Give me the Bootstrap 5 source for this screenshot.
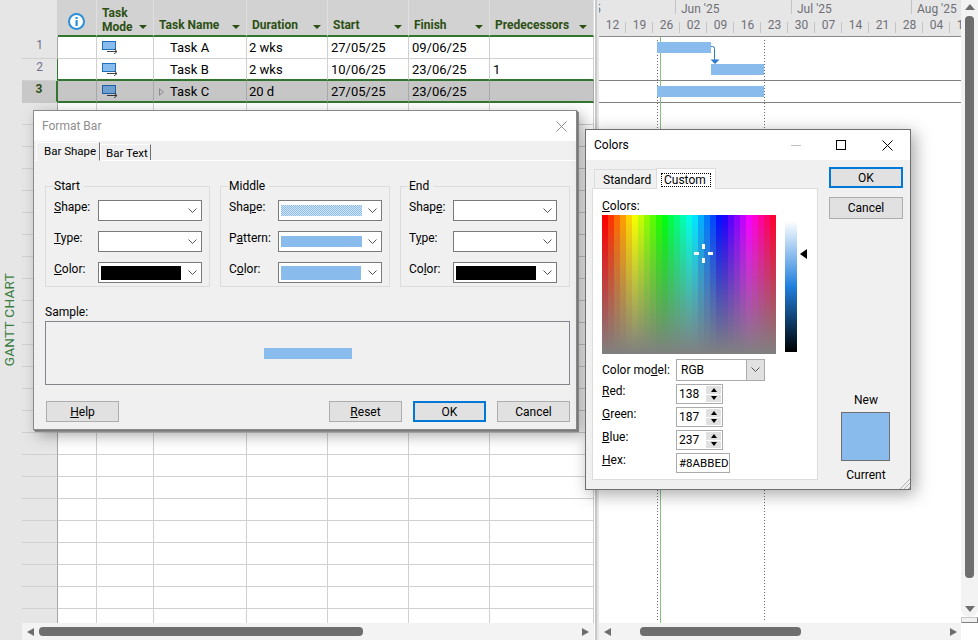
<!DOCTYPE html>
<html lang="en">
<head>
<meta charset="utf-8">
<title>Gantt chart with Format Bar and Colors dialogs</title>
<link rel="stylesheet" href="https://cdn.jsdelivr.net/npm/bootstrap@5.3.0/dist/css/bootstrap.min.css">
<style>
html,body{margin:0;background:#fff;}
body{font-family:Roboto,"Liberation Sans",sans-serif;font-size:12px;color:#000;}
.stage{width:978px;height:640px;position:relative;overflow:hidden;}
.gutter{width:22px;background:#e6e6e6;}
.gutter-label{writing-mode:vertical-rl;transform:rotate(180deg);color:#3a7d3f;font-size:13.5px;letter-spacing:.3px;margin-top:273px;margin-bottom:auto;margin-right:4px;line-height:17px;align-self:center;}
.sheet{width:572px;}
.sheet-clip{height:623px;overflow:hidden;}
.table.gt-tbl{width:572px;table-layout:fixed;border-collapse:separate;border-spacing:0;margin:0;--bs-table-bg:transparent;}
.table.gt-tbl>:not(caption)>*>*{padding:0 3px;border-width:0 1px 1px 0;border-style:solid;border-color:#d0d0d0;height:22px;box-shadow:none;font-size:13px;line-height:15px;vertical-align:middle;color:#000;background:#fff;white-space:nowrap;}
.table.gt-tbl>thead>tr>th{height:37px;padding:0 6px 1px 5px;background:#d2d2d2;border-right-color:#e0e0e0;border-bottom:2px solid #32752f;color:#2c4f13;font-size:12px;font-weight:700;line-height:14px;vertical-align:bottom;}
.table.gt-tbl>thead>tr>th.rn-head{background:#e6e6e6;border-right:1px solid #d0d0d0;border-bottom:0;}
.table.gt-tbl>tbody>tr>td.rn{background:#e6e6e6;border-right:1px solid #a6a6a6;border-bottom-color:#d0d0d0;text-align:center;color:#6f6f88;font-size:12px;padding:0 0 4px;}
.table.gt-tbl>tbody>tr>td.tn{padding-left:16px;position:relative;}
.table.gt-tbl>tbody>tr>td.dur{padding-left:2px;}
.table.gt-tbl>tbody>tr.r2>td:not(.rn){border-bottom:2px solid #32752f;}
.table.gt-tbl>tbody>tr.r3>td{background:#c6c6c6;border-bottom:2px solid #32752f;border-right-color:#a8a8a8;}
.table.gt-tbl>tbody>tr.r3>td.rn{background:#c8c8c8;color:#2c4f13;font-weight:700;border-bottom:2px solid #c8c8c8;border-right:2px solid #32752f;padding:0 0 4px;}
.table.gt-tbl>tbody>tr.r2>td.rn{border-right-color:#32752f;}
.hd-txt{margin-bottom:2px;}
.hd-txt2{margin-bottom:0;}
.hd-caret{display:block;flex:none;width:0;height:0;border-left:4px solid transparent;border-right:4px solid transparent;border-top:4px solid #2c4f13;margin-bottom:5px;}
.exp-tri{position:absolute;left:5px;top:7px;width:0;height:0;border-left:5px solid #8a8a8a;border-top:4px solid transparent;border-bottom:4px solid transparent;}
.exp-tri::after{content:"";position:absolute;left:-4px;top:-2px;width:0;height:0;border-left:3px solid #c6c6c6;border-top:2px solid transparent;border-bottom:2px solid transparent;}
.mode-ico{display:block;width:16px;height:13px;margin-left:2px;}
.hbar{height:17px;background:#f3f3f3;}
.hthumb{height:9px;background:#6e6e6e;border-radius:4px;}
.ar-l,.ar-r,.ar-u,.ar-d{width:0;height:0;flex:none;border-style:solid;border-color:transparent;}
.ar-l{border-width:4px 7px 4px 0;border-right-color:#6e6e6e;}
.ar-r{border-width:4px 0 4px 7px;border-left-color:#6e6e6e;}
.ar-u{border-width:0 5px 6px 5px;border-bottom-color:#6e6e6e;}
.ar-d{border-width:6px 5px 0 5px;border-top-color:#6e6e6e;}
.sb-l1{margin-left:5px;}.th-l1{margin-left:5px;width:324px;}.ar-r1{margin-left:auto;margin-right:5px;}
.sb-l2{margin-left:5px;}.th-l2{margin-left:29px;width:161px;}.ar-r2{margin-left:auto;margin-right:4px;}
.splitter{width:5px;background:linear-gradient(to right,#fff 0,#fff 1px,#c8c8c8 1px,#c8c8c8 3px,#e6e6e6 3px);}
.gantt{width:362px;}
.g-head{height:37px;background:#e6e6e6;border-bottom:1px solid #8a8a8a;overflow:hidden;color:#6f6f78;}
.months{height:18px;font-size:12px;line-height:18px;white-space:nowrap;}
.mon{height:14px;border-left:1px solid #c4c4c4;padding-left:5px;flex:none;}
.mon-first{width:76px;flex:none;}
.mon-first span{display:block;margin-left:-5px;}
.mon-jun{width:116px}.mon-jul{width:120px}.mon-aug{width:60px;}
.days{height:18px;font-size:12px;line-height:14px;white-space:nowrap;}
.dcell{width:27px;flex:none;height:18px;text-align:center;position:relative;}
.dcell::after{content:"";position:absolute;right:0;top:4px;height:11px;width:1px;background:#c4c4c4;}
.g-body{height:586px;position:relative;overflow:hidden;background:#fff;}
.gbar{position:absolute;height:11px;background:#8abbed;}
.bar-a{left:58px;top:5px;width:54px;}
.bar-b{left:112px;top:27px;width:53px;}
.bar-c{left:58px;top:49px;width:107px;}
.g-rule{position:absolute;left:0;right:0;height:1px;background:#808080;}
.rule-1{top:43px}.rule-2{top:65px;}
.g-dot{position:absolute;top:3px;bottom:3px;width:1px;background:repeating-linear-gradient(to bottom,#6a6a6a 0 1px,transparent 1px 3px);}
.dot-1{left:58px}.dot-2{left:165px;}
.g-now{position:absolute;top:0;bottom:0;left:61px;width:1px;background:#87c187;}
.g-link{position:absolute;left:111px;top:9px;width:12px;height:19px;}
.vbar{width:17px;background:#fff;}
.vtrack{height:617px;background:#f3f3f3;border-radius:0 0 8px 8px;padding:4px 0 5px;}
.vthumb{width:9px;height:562px;margin-top:6px;background:#6e6e6e;border-radius:4px;}
.vgrip{height:6px;background:#f0f0f0;border:1px solid #c8c8c8;border-bottom-color:#808080;border-right-color:#808080;margin:0;}
.win{position:absolute;background:#f0f0f0;border:1px solid #8a8a8a;}
.win-fmt{left:33px;top:110px;width:544px;height:320px;box-shadow:1px 1px 0 #7a7a7a,2px 2px 0 #8a8a8a,5px 5px 14px rgba(0,0,0,.35);}
.win-col{left:585px;top:129px;width:326px;height:361px;border-color:#6f6f6f;box-shadow:4px 4px 16px rgba(0,0,0,.35);}
.win-title{height:30px;background:#fff;padding:0 8px;font-size:12px;flex:none;}
.win-fmt .win-title{color:#8e8e8e;}
.win-x{width:11px;height:11px;display:block;}
.win-x-fmt{margin-right:1px;}
.tabs-fmt{height:20px;padding-left:2px;align-items:flex-end;border-bottom:0;flex:none;flex-wrap:nowrap;position:relative;--bs-nav-tabs-border-width:0;}
.tabs-fmt::after{content:"";position:absolute;left:0;right:0;bottom:0;height:1px;background:#fff;}
.nav-tabs .nav-link.wtab{font-size:11.5px;line-height:14px;color:#000;background:#f0f0f0;border:1px solid #fff;border-right:1px solid #6f6f6f;border-bottom:0;border-radius:0;padding:1px 0 1px 5px;height:17px;width:51px;margin:0;white-space:nowrap;}
.nav-tabs .nav-link.wtab.active{height:19px;padding:1px 0 0 7px;width:64px;margin:0;background:#f0f0f0;color:#000;position:relative;z-index:1;border-bottom:1px solid #f0f0f0;}
.fmt-groups{margin-top:17px;padding:0 6px 0 11px;gap:10px;}
.grp{border:1px solid #dcdcdc;padding:0 0 4px 8px;margin:0;height:109px;flex:none;}
.grp legend{float:none;width:auto;font-size:12px;line-height:16px;padding:0 4px 0 0;margin:0 0 6px 0;background:transparent;color:#000;}
.grp-a{width:165px;}.grp-b{width:170px;}.grp-c{width:170px;}
.frow{margin-bottom:10px;align-items:flex-start;}
.frow:last-child{margin-bottom:0;}
.flab{width:44px;flex:none;line-height:15px;}
.grp-b .flab{width:49px;}
.combo{width:104px;height:21px;background:#fff;border:1px solid #7a7a7a;padding:2px;}
.swatch{display:block;width:81px;height:13px;}
.sw-k{background:#000;height:14px;width:80px;}
.sw-bb{background:#8abbed;height:11px;}
.sw-bc{background:#8abbed;height:14px;width:80px;}
.sw-p{height:11px;background-color:#8abbed;background-image:repeating-conic-gradient(#d4e6f8 0 25%,#8abbed 0 50%);background-size:2px 2px;}
.chev{width:9px;height:6px;display:block;margin-left:auto;margin-right:2px;flex:none;}
.sample-lab{margin:18px 0 1px 11px;line-height:15px;}
.sample-box{height:64px;margin:0 6px 0 11px;border:1px solid #84848c;}
.sample-bar{display:block;width:88px;height:11px;background:#8abbed;}
.win-btns{margin-top:16px;padding:0 6px 0 12px;gap:11px;}
.btn.wbtn{width:73px;height:21px;padding:1px 0 0;font-size:12px;line-height:19px;color:#000;background:#e1e1e1;border:1px solid #adadad;border-radius:0;}
.btn.wbtn-def{border:2px solid #0078d7;line-height:17px;}
.wc{display:block;}
.col-min{width:10px;height:1px;background:#c0c0c0;margin-right:35px;}
.col-max{width:10px;height:10px;border:1px solid #000;margin-right:36px;}
.col-x{width:11px;height:11px;margin-right:9px;}
.col-main{padding-left:6px;}
.col-left{width:226px;}
.tabs-col{height:28px;padding:0 0 0 2px;align-items:flex-end;flex-wrap:nowrap;--bs-nav-tabs-border-width:0;border-bottom:0;}
.nav-tabs .nav-link.ctab{font-size:12px;line-height:14px;color:#000;height:19px;width:62px;padding:3px 0 0 8px;background:#f0f0f0;border:1px solid #dcdcdc;border-width:1px 0 0 1px;border-radius:0;margin:0;}
.nav-tabs .nav-link.ctab.active{height:21px;width:60px;padding:4px;background:#fff;border:1px solid #dcdcdc;border-bottom:0;color:#000;margin:0;position:relative;top:1px;}
.focus-dots{display:block;border:1px dotted #000;padding:0 2px;line-height:12px;height:14px;}
.col-panel{height:292px;width:226px;background:#fff;border:1px solid #dcdcdc;padding:10px 9px 0;}
.col-lab{line-height:15px;height:16px;}
.spec-row{height:139px;gap:9px;position:relative;}
.spectrum{width:174px;height:139px;position:relative;flex:none;background:linear-gradient(to right,red,yellow,lime,cyan,blue,magenta,red);}
.spec-fade{position:absolute;inset:0;background:linear-gradient(to bottom,rgba(128,128,128,0),#808080);}
.cross{position:absolute;left:92px;top:29px;width:19px;height:19px;}
.lum{width:12px;height:131px;margin-top:6px;background:linear-gradient(to bottom,#fff,hsl(210,75%,50%) 50%,#000);flex:none;}
.lum-mark{width:0;height:0;margin-top:34px;margin-left:-6px;border-style:solid;border-width:5px 7px 5px 0;border-color:transparent #000 transparent transparent;flex:none;}
.mrow{margin-top:3px;align-items:flex-start;}
.mrow-sel{margin-top:5px;align-items:center;}
.mlab{width:74px;flex:none;line-height:15px;}
.sel-box{width:89px;height:22px;border:1px solid #ababab;background:#fff;padding-left:4px;line-height:20px;}
.sel-btn{width:18px;height:20px;margin-left:auto;background:#e1e1e1;border-left:1px solid #ababab;}
.spin{width:47px;height:20px;border:1px solid #ababab;background:#fff;}
.spin-val{padding-left:2px;line-height:18px;flex:1;}
.spin-btns{width:15px;margin:1px;gap:1px;}
.spin-b{flex:1;background:#e1e1e1;border:0;}
.spin-u{width:0;height:0;border-left:3px solid transparent;border-right:3px solid transparent;border-bottom:4px solid #000;}
.spin-d{width:0;height:0;border-left:3px solid transparent;border-right:3px solid transparent;border-top:4px solid #000;}
.hexbox{width:54px;height:20px;border:1px solid #ababab;background:#fff;padding-left:2px;line-height:18px;font-size:11.5px;}
.col-right{width:74px;margin-left:11px;padding-top:7px;position:relative;}
.col-right .btn.wbtn{width:74px;}
.col-right .btn.wbtn+.btn.wbtn{margin-top:9px;height:22px;}
.new-lab{margin-top:174px;line-height:15px;text-align:center;}
.new-sw{width:49px;height:49px;background:#8abbed;border:1px solid #6f6f6f;margin:4px 0 7px 12px;}
.cur-lab{line-height:15px;text-align:center;}
.grip{position:absolute;right:0;bottom:0;width:11px;height:11px;background:repeating-linear-gradient(135deg,transparent 0 2px,#b0b0b0 2px 3px);clip-path:polygon(100% 0,100% 100%,0 100%);}
</style>
</head>
<body>
<div class="stage d-flex">
  <div class="gutter d-flex flex-column"><div class="gutter-label">GANTT CHART</div></div>
  <div class="sheet d-flex flex-column">
    <div class="sheet-clip">
      <table class="table gt-tbl">
        <colgroup><col style="width:36px"><col style="width:39px"><col style="width:57px"><col style="width:93px"><col style="width:81px"><col style="width:81px"><col style="width:81px"><col style="width:104px"></colgroup>
        <thead><tr>
          <th class="rn-head"></th>
          <th><div class="d-flex justify-content-center pb-1 pe-0"><svg width="17" height="17" viewBox="0 0 17 17"><circle cx="8.5" cy="8.5" r="7.5" fill="#fff" stroke="#2b90d9" stroke-width="2"/><rect x="7.5" y="7" width="2.2" height="6" fill="#2b90d9"/><rect x="7.5" y="4" width="2.2" height="2" fill="#2b90d9"/></svg></div></th>
          <th><div class="d-flex justify-content-between align-items-end"><span class="hd-txt2">Task<br>Mode</span><i class="hd-caret"></i></div></th>
          <th><div class="d-flex justify-content-between align-items-end"><span class="hd-txt">Task Name</span><i class="hd-caret"></i></div></th>
          <th><div class="d-flex justify-content-between align-items-end"><span class="hd-txt">Duration</span><i class="hd-caret"></i></div></th>
          <th><div class="d-flex justify-content-between align-items-end"><span class="hd-txt">Start</span><i class="hd-caret"></i></div></th>
          <th><div class="d-flex justify-content-between align-items-end"><span class="hd-txt">Finish</span><i class="hd-caret"></i></div></th>
          <th><div class="d-flex justify-content-between align-items-end"><span class="hd-txt">Predecessors</span><i class="hd-caret"></i></div></th>
        </tr></thead>
        <tbody>
          <tr><td class="rn">1</td><td></td><td><svg class="mode-ico" viewBox="0 0 16 13"><rect x=".5" y=".5" width="13" height="8" fill="#8abbed" stroke="#1f6fbf"/><path d="M5 10.5h10M12 8l3 2.5L12 13" fill="none" stroke="#444"/></svg></td><td class="tn">Task A</td><td class="dur">2 wks</td><td>27/05/25</td><td>09/06/25</td><td></td></tr>
          <tr class="r2"><td class="rn">2</td><td></td><td><svg class="mode-ico" viewBox="0 0 16 13"><rect x=".5" y=".5" width="13" height="8" fill="#8abbed" stroke="#1f6fbf"/><path d="M5 10.5h10M12 8l3 2.5L12 13" fill="none" stroke="#444"/></svg></td><td class="tn">Task B</td><td class="dur">2 wks</td><td>10/06/25</td><td>23/06/25</td><td>1</td></tr>
          <tr class="r3"><td class="rn">3</td><td></td><td><svg class="mode-ico" viewBox="0 0 16 13"><rect x=".5" y=".5" width="13" height="8" fill="#6f9fcf" stroke="#1f5f9f"/><path d="M5 10.5h10M12 8l3 2.5L12 13" fill="none" stroke="#333"/></svg></td><td class="tn"><i class="exp-tri"></i>Task C</td><td class="dur">20 d</td><td>27/05/25</td><td>23/06/25</td><td></td></tr>
          <tr><td class="rn"></td><td></td><td></td><td></td><td></td><td></td><td></td><td></td></tr>
          <tr><td class="rn"></td><td></td><td></td><td></td><td></td><td></td><td></td><td></td></tr>
          <tr><td class="rn"></td><td></td><td></td><td></td><td></td><td></td><td></td><td></td></tr>
          <tr><td class="rn"></td><td></td><td></td><td></td><td></td><td></td><td></td><td></td></tr>
          <tr><td class="rn"></td><td></td><td></td><td></td><td></td><td></td><td></td><td></td></tr>
          <tr><td class="rn"></td><td></td><td></td><td></td><td></td><td></td><td></td><td></td></tr>
          <tr><td class="rn"></td><td></td><td></td><td></td><td></td><td></td><td></td><td></td></tr>
          <tr><td class="rn"></td><td></td><td></td><td></td><td></td><td></td><td></td><td></td></tr>
          <tr><td class="rn"></td><td></td><td></td><td></td><td></td><td></td><td></td><td></td></tr>
          <tr><td class="rn"></td><td></td><td></td><td></td><td></td><td></td><td></td><td></td></tr>
          <tr><td class="rn"></td><td></td><td></td><td></td><td></td><td></td><td></td><td></td></tr>
          <tr><td class="rn"></td><td></td><td></td><td></td><td></td><td></td><td></td><td></td></tr>
          <tr><td class="rn"></td><td></td><td></td><td></td><td></td><td></td><td></td><td></td></tr>
          <tr><td class="rn"></td><td></td><td></td><td></td><td></td><td></td><td></td><td></td></tr>
          <tr><td class="rn"></td><td></td><td></td><td></td><td></td><td></td><td></td><td></td></tr>
          <tr><td class="rn"></td><td></td><td></td><td></td><td></td><td></td><td></td><td></td></tr>
          <tr><td class="rn"></td><td></td><td></td><td></td><td></td><td></td><td></td><td></td></tr>
          <tr><td class="rn"></td><td></td><td></td><td></td><td></td><td></td><td></td><td></td></tr>
          <tr><td class="rn"></td><td></td><td></td><td></td><td></td><td></td><td></td><td></td></tr>
          <tr><td class="rn"></td><td></td><td></td><td></td><td></td><td></td><td></td><td></td></tr>
          <tr><td class="rn"></td><td></td><td></td><td></td><td></td><td></td><td></td><td></td></tr>
          <tr><td class="rn"></td><td></td><td></td><td></td><td></td><td></td><td></td><td></td></tr>
          <tr><td class="rn"></td><td></td><td></td><td></td><td></td><td></td><td></td><td></td></tr>
          <tr><td class="rn"></td><td></td><td></td><td></td><td></td><td></td><td></td><td></td></tr>
        </tbody>
      </table>
    </div>
    <div class="hbar d-flex align-items-center"><i class="ar-l sb-l1"></i><div class="hthumb th-l1"></div><i class="ar-r ar-r1"></i></div>
  </div>
  <div class="splitter"></div>
  <div class="gantt d-flex flex-column">
    <div class="g-head">
      <div class="months d-flex">
        <div class="mon-first"><span>5</span></div>
        <div class="mon mon-jun">Jun '25</div>
        <div class="mon mon-jul">Jul '25</div>
        <div class="mon mon-aug">Aug '25</div>
      </div>
      <div class="days d-flex">
        <div class="dcell">12</div><div class="dcell">19</div><div class="dcell">26</div><div class="dcell">02</div><div class="dcell">09</div><div class="dcell">16</div><div class="dcell">23</div><div class="dcell">30</div><div class="dcell">07</div><div class="dcell">14</div><div class="dcell">21</div><div class="dcell">28</div><div class="dcell">04</div><div class="dcell">11</div>
      </div>
    </div>
    <div class="g-body">
      <div class="g-rule rule-1"></div>
      <div class="g-rule rule-2"></div>
      <div class="g-dot dot-1"></div>
      <div class="g-now"></div>
      <div class="g-dot dot-2"></div>
      <div class="gbar bar-a"></div>
      <div class="gbar bar-b"></div>
      <div class="gbar bar-c"></div>
      <svg class="g-link" viewBox="0 0 12 19"><path d="M1 .5h1.500Q4.500.5 4.500 2.500V14" fill="none" stroke="#2a7bd0"/><path d="M.5 13.500h9L5 18z" fill="#2a7bd0"/></svg>
    </div>
    <div class="hbar d-flex align-items-center"><i class="ar-l sb-l2"></i><div class="hthumb th-l2"></div><i class="ar-r ar-r2"></i></div>
  </div>
  <div class="vbar d-flex flex-column">
    <div class="vtrack d-flex flex-column align-items-center"><i class="ar-u"></i><div class="vthumb"></div><i class="ar-d mt-auto"></i></div>
    <div class="vgrip"></div>
  </div>

  <div class="win win-fmt d-flex flex-column">
    <div class="win-title d-flex align-items-center justify-content-between"><span>Format Bar</span><svg class="win-x win-x-fmt" viewBox="0 0 11 11"><path d="M.5.5l10 10M10.500.5l-10 10" stroke="#8e8e8e" fill="none"/></svg></div>
    <ul class="nav nav-tabs tabs-fmt">
      <li class="nav-item"><a class="nav-link wtab active" href="#">Bar Shape</a></li>
      <li class="nav-item"><a class="nav-link wtab" href="#">Bar Text</a></li>
    </ul>
    <div class="fmt-groups d-flex">
      <fieldset class="grp grp-a">
        <legend>Start</legend>
        <div class="frow d-flex"><span class="flab"><u>S</u>hape:</span><div class="combo d-flex align-items-center"><svg class="chev" viewBox="0 0 9 6"><path d="M.5.500l4 4 4-4" fill="none" stroke="#555"/></svg></div></div>
        <div class="frow d-flex"><span class="flab"><u>T</u>ype:</span><div class="combo d-flex align-items-center"><svg class="chev" viewBox="0 0 9 6"><path d="M.5.500l4 4 4-4" fill="none" stroke="#555"/></svg></div></div>
        <div class="frow d-flex"><span class="flab"><u>C</u>olor:</span><div class="combo d-flex align-items-center"><i class="swatch sw-k"></i><svg class="chev" viewBox="0 0 9 6"><path d="M.5.500l4 4 4-4" fill="none" stroke="#555"/></svg></div></div>
      </fieldset>
      <fieldset class="grp grp-b">
        <legend>Middle</legend>
        <div class="frow d-flex"><span class="flab">Sha<u>p</u>e:</span><div class="combo d-flex align-items-center"><i class="swatch sw-p"></i><svg class="chev" viewBox="0 0 9 6"><path d="M.5.500l4 4 4-4" fill="none" stroke="#555"/></svg></div></div>
        <div class="frow d-flex"><span class="flab">P<u>a</u>ttern:</span><div class="combo d-flex align-items-center"><i class="swatch sw-bb"></i><svg class="chev" viewBox="0 0 9 6"><path d="M.5.500l4 4 4-4" fill="none" stroke="#555"/></svg></div></div>
        <div class="frow d-flex"><span class="flab">C<u>o</u>lor:</span><div class="combo d-flex align-items-center"><i class="swatch sw-bc"></i><svg class="chev" viewBox="0 0 9 6"><path d="M.5.500l4 4 4-4" fill="none" stroke="#555"/></svg></div></div>
      </fieldset>
      <fieldset class="grp grp-c">
        <legend>End</legend>
        <div class="frow d-flex"><span class="flab">Shap<u>e</u>:</span><div class="combo d-flex align-items-center"><svg class="chev" viewBox="0 0 9 6"><path d="M.5.500l4 4 4-4" fill="none" stroke="#555"/></svg></div></div>
        <div class="frow d-flex"><span class="flab">T<u>y</u>pe:</span><div class="combo d-flex align-items-center"><svg class="chev" viewBox="0 0 9 6"><path d="M.5.500l4 4 4-4" fill="none" stroke="#555"/></svg></div></div>
        <div class="frow d-flex"><span class="flab">Co<u>l</u>or:</span><div class="combo d-flex align-items-center"><i class="swatch sw-k"></i><svg class="chev" viewBox="0 0 9 6"><path d="M.5.500l4 4 4-4" fill="none" stroke="#555"/></svg></div></div>
      </fieldset>
    </div>
    <div class="sample-lab">Sample:</div>
    <div class="sample-box d-flex align-items-center justify-content-center"><i class="sample-bar"></i></div>
    <div class="win-btns d-flex">
      <button type="button" class="btn wbtn"><u>H</u>elp</button>
      <button type="button" class="btn wbtn ms-auto"><u>R</u>eset</button>
      <button type="button" class="btn wbtn wbtn-def">OK</button>
      <button type="button" class="btn wbtn">Cancel</button>
    </div>
  </div>

  <div class="win win-col d-flex flex-column">
    <div class="win-title d-flex align-items-center"><span class="me-auto">Colors</span><i class="wc col-min"></i><i class="wc col-max"></i><svg class="wc col-x" viewBox="0 0 11 11"><path d="M.5.5l10 10M10.500.5l-10 10" stroke="#000" fill="none"/></svg></div>
    <div class="col-main d-flex">
      <div class="col-left">
        <ul class="nav nav-tabs tabs-col">
          <li class="nav-item"><a class="nav-link ctab" href="#">Standard</a></li>
          <li class="nav-item"><a class="nav-link ctab active" href="#"><span class="focus-dots">Custom</span></a></li>
        </ul>
        <div class="col-panel">
          <div class="col-lab"><u>C</u>olors:</div>
          <div class="spec-row d-flex">
            <div class="spectrum" id="spectrum"><div class="spec-fade"></div><svg class="cross" viewBox="0 0 19 19"><path d="M8 0h3v5H8zM8 14h3v5H8zM0 8h5v3H0zM14 8h5v3h-5z" fill="#fff"/></svg></div>
            <div class="lum"></div>
            <i class="lum-mark"></i>
          </div>
          <div class="mrow-sel d-flex"><span class="mlab">Color mo<u>d</u>el:</span><div class="sel-box d-flex">RGB<div class="sel-btn d-flex align-items-center justify-content-center"><svg width="9" height="6" viewBox="0 0 9 6"><path d="M.5.500l4 4 4-4" fill="none" stroke="#555"/></svg></div></div></div>
          <div class="mrow d-flex"><span class="mlab"><u>R</u>ed:</span><div class="spin d-flex"><span class="spin-val">138</span><div class="spin-btns d-flex flex-column"><div class="spin-b d-flex align-items-center justify-content-center"><i class="spin-u"></i></div><div class="spin-b d-flex align-items-center justify-content-center"><i class="spin-d"></i></div></div></div></div>
          <div class="mrow d-flex"><span class="mlab"><u>G</u>reen:</span><div class="spin d-flex"><span class="spin-val">187</span><div class="spin-btns d-flex flex-column"><div class="spin-b d-flex align-items-center justify-content-center"><i class="spin-u"></i></div><div class="spin-b d-flex align-items-center justify-content-center"><i class="spin-d"></i></div></div></div></div>
          <div class="mrow d-flex"><span class="mlab"><u>B</u>lue:</span><div class="spin d-flex"><span class="spin-val">237</span><div class="spin-btns d-flex flex-column"><div class="spin-b d-flex align-items-center justify-content-center"><i class="spin-u"></i></div><div class="spin-b d-flex align-items-center justify-content-center"><i class="spin-d"></i></div></div></div></div>
          <div class="mrow d-flex"><span class="mlab"><u>H</u>ex:</span><div class="hexbox">#8ABBED</div></div>
        </div>
      </div>
      <div class="col-right">
        <button type="button" class="btn wbtn wbtn-def d-block">OK</button>
        <button type="button" class="btn wbtn d-block">Cancel</button>
        <div class="new-lab">New</div>
        <div class="new-sw"></div>
        <div class="cur-lab">Current</div>
      </div>
    </div>
    <i class="grip"></i>
  </div>
</div>
<script src="https://cdn.jsdelivr.net/npm/bootstrap@5.3.0/dist/js/bootstrap.bundle.min.js"></script>
<script>
(function(){
  var n=29,s=[];
  for(var i=0;i<n;i++){var h=Math.round(i*360/n);s.push('hsl('+h+',100%,50%) '+(i*6)+'px '+((i+1)*6)+'px');}
  document.getElementById('spectrum').style.background='linear-gradient(to right,'+s.join(',')+')';
})();
</script>
</body>
</html>
